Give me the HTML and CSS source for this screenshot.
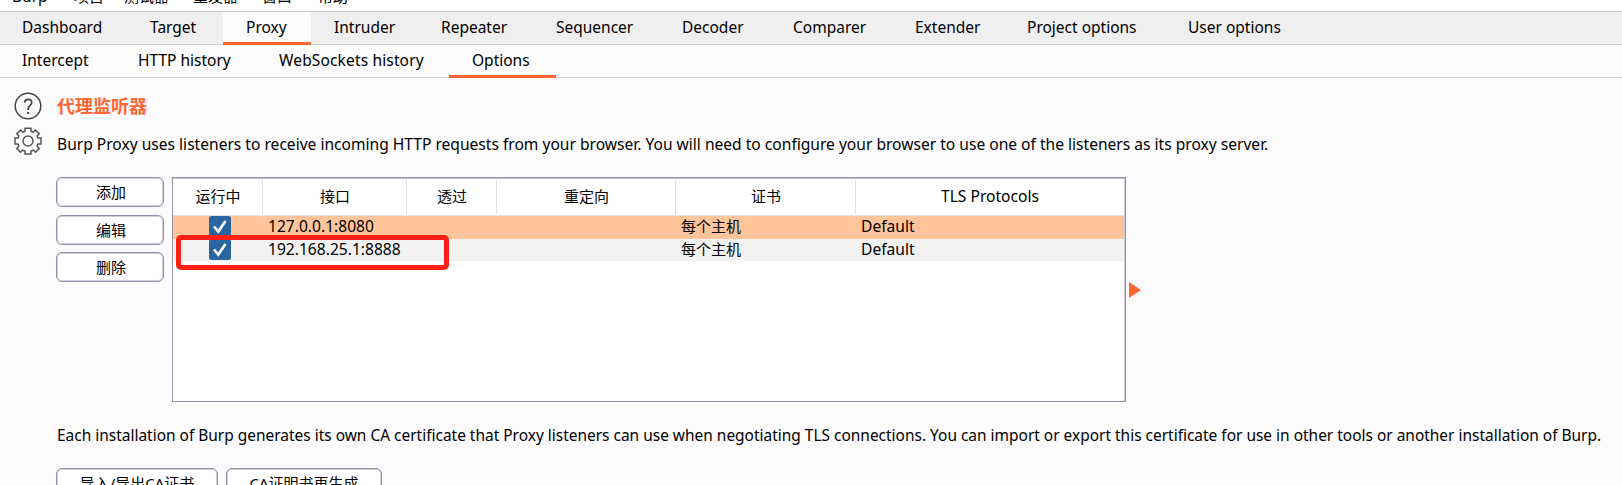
FILE: index.html
```html
<!DOCTYPE html>
<html lang="zh">
<head>
<meta charset="utf-8">
<title>Burp Proxy Options</title>
<link rel="stylesheet" href="styles.css">
</head>
<body>
<nav class="menu"><span>Burp</span><span>项目</span><span>测试器</span><span>重发器</span><span>窗口</span><span>帮助</span></nav>
<nav class="tabs main-tabs"><span>Dashboard</span><span>Target</span><span class="active">Proxy</span><span>Intruder</span><span>Repeater</span><span>Sequencer</span><span>Decoder</span><span>Comparer</span><span>Extender</span><span>Project options</span><span>User options</span></nav>
<nav class="tabs sub-tabs"><span>Intercept</span><span>HTTP history</span><span class="wide">WebSockets history</span><span class="active">Options</span></nav>
<main class="panel">
  <aside class="tools">
    <svg width="28" height="28" viewBox="0 0 28 28" fill="none" stroke="#444" stroke-width="1.5"><circle cx="14" cy="14" r="12.8"/><path d="M10.6 10.6C10.8 8.3 12.1 7.3 14.1 7.3C16.3 7.3 17.7 8.6 17.7 10.5C17.7 13.2 14.2 13.5 14.2 16.8V18" stroke-width="1.7"/><path d="M13.2 20h2v2h-2z" fill="#444" stroke="none"/></svg>
    <svg width="28" height="28" viewBox="0 0 28 28" fill="none" stroke="#555" stroke-width="1.5"><path d="M11 1.200h6v3l2.200.9 2.300-2.100 3.700 3.700-2.100 2.300.9 2h3v6h-3l-.9 2.200 2.100 2.300-3.700 3.700-2.300-2.100-2.200.9v3h-6v-3l-2.200-.9-2.300 2.100-3.700-3.700 2.100-2.300-.9-2.200h-3v-6h3l.9-2-2.100-2.300 3.700-3.700 2.300 2.100 2.200-.9z"/><circle cx="14" cy="14" r="5"/></svg>
  </aside>
  <section class="content">
    <h1>代理监听器</h1>
    <p class="intro">Burp Proxy uses listeners to receive incoming HTTP requests from your browser. You will need to configure your browser to use one of the listeners as its proxy server.</p>
    <div class="listeners">
      <div class="actions"><button>添加</button><button>编辑</button><button>删除</button></div>
      <div class="table">
        <div class="row head"><span>运行中</span><span>接口</span><span>透过</span><span>重定向</span><span>证书</span><span class="latin">TLS Protocols</span></div>
        <div class="row selected"><span class="check"><svg width="22" height="21" viewBox="0 0 22 21"><rect width="22" height="21" rx="2.500" fill="#2866a0"/><path d="M5 10.500l4.300 5L16.500 5" fill="none" stroke="#fff" stroke-width="2.600"/></svg></span><span class="latin">127.0.0.1:8080</span><span></span><span></span><span>每个主机</span><span class="latin">Default</span></div>
        <div class="row odd"><span class="check"><svg width="22" height="21" viewBox="0 0 22 21"><rect width="22" height="21" rx="2.500" fill="#2866a0"/><path d="M5 10.500l4.300 5L16.500 5" fill="none" stroke="#fff" stroke-width="2.600"/></svg></span><span class="latin">192.168.25.1:8888</span><span></span><span></span><span>每个主机</span><span class="latin">Default</span></div>
        <div class="highlight"></div>
      </div>
      <svg class="arrow" width="12" height="16" viewBox="0 0 12 16"><path d="M0 0L12 8L0 16Z" fill="#ff6633"/></svg>
    </div>
    <p class="note">Each installation of Burp generates its own CA certificate that Proxy listeners can use when negotiating TLS connections. You can import or export this certificate for use in other tools or another installation of Burp.</p>
    <div class="cert-actions"><button>导入/导出CA证书</button><button>CA证明书再生成</button></div>
  </section>
</main>
</body>
</html>
```
FILE: styles.css
```css
* { box-sizing: border-box; }
body {
  margin: 0; height: 485px; overflow: hidden; background: #fbfbfb; color: #000;
  font: 15px/20px "Noto Sans", "Noto Sans CJK SC", sans-serif;
}
button, h1, p { margin: 0; font: inherit; color: inherit; }
.menu {
  height: 12px; background: #fff; border-bottom: 1px solid #cbd0cf; overflow: hidden;
  display: grid; grid-template-columns: 62px 50px 69px 69px 56px 60px;
  padding-left: 12px; align-items: start;
}
.menu span { height: 20px; margin-top: -14px; line-height: 20px; white-space: nowrap; }
.menu span:first-child { font-size: 15.500px; }
.tabs { display: grid; height: 33px; border-bottom: 1px solid #cbd0cf; white-space: nowrap; font-size: 15.500px; }
.tabs span { height: 33px; line-height: 30px; padding-left: 23px; }
.tabs .active { background: #fbfbfb; border-bottom: 3px solid #ff6633; }
.main-tabs { background: #efefef; grid-template-columns: 127px 96px 88px 107px 115px 126px 111px 122px 112px 161px 142px; }
.main-tabs span:first-child, .sub-tabs span:first-child { padding-left: 22px; }
.sub-tabs { grid-template-columns: 115px 141px 193px 107px; }
.sub-tabs .wide { letter-spacing: .15px; }
.panel { display: flex; }
.tools { width: 57px; padding: 14px 0 0 14px; display: flex; flex-direction: column; gap: 7px; }
.content { flex: 1; min-width: 0; padding-top: 18px; }
h1 { font-size: 18px; line-height: 20px; font-weight: 700; color: #ff6633; }
p { white-space: nowrap; }
.intro { margin-top: 18px; font-size: 15.580px; }
.listeners { display: flex; margin: 23px 0 0 -1px; height: 225px; }
.actions { width: 108px; display: flex; flex-direction: column; gap: 8px; margin-right: 8px; }
.actions button:last-child { margin-top: -1px; }
button { height: 30px; padding: 0 0 0 2px; border: 1px solid #9490a5; border-radius: 6px; box-shadow: inset 0 0 0 1px #d0ced8; background: #fff; line-height: 28px; }
.table { position: relative; width: 954px; border: 1px solid #9490a5; box-shadow: inset -1px 1px #c8c6d0; background: #fff; }
.row { display: grid; grid-template-columns: 90px 144px 90px 179px 180px 1fr; height: 22px; line-height: 21px; margin-right: 1px; }
.row span { padding-left: 5px; }
.row .latin { font-size: 15.600px; line-height: 20px; }
.head { height: 38px; line-height: 37px; border-bottom: 1px solid #dfe2e3; padding-top: 2px; }
.head span { padding: 0 0 0 1px; text-align: center; height: 34px; border-right: 1px solid #e2e2e2; line-height: 33px; }
.head .latin { line-height: 33px; padding: 0; }
.head span:last-child { border: 0; }
.selected { background: #ffc499; height: 23px; }
.odd { background: #f2f2f2; }
.row .check { padding-left: 36px; }
.check svg { display: block; }
.highlight { position: absolute; left: 3px; top: 57px; width: 273px; height: 35px; border: 5px solid #ff2013; border-radius: 5px; }
.arrow { margin: 105px 0 0 3px; }
.note { margin-top: 23px; font-size: 15.460px; }
.cert-actions { display: flex; gap: 8px; margin: 23px 0 0 -1px; }
.cert-actions button { padding: 0; line-height: 29px; }
.cert-actions button:first-child { width: 162px; }
.cert-actions button:last-child { width: 156px; }
```
